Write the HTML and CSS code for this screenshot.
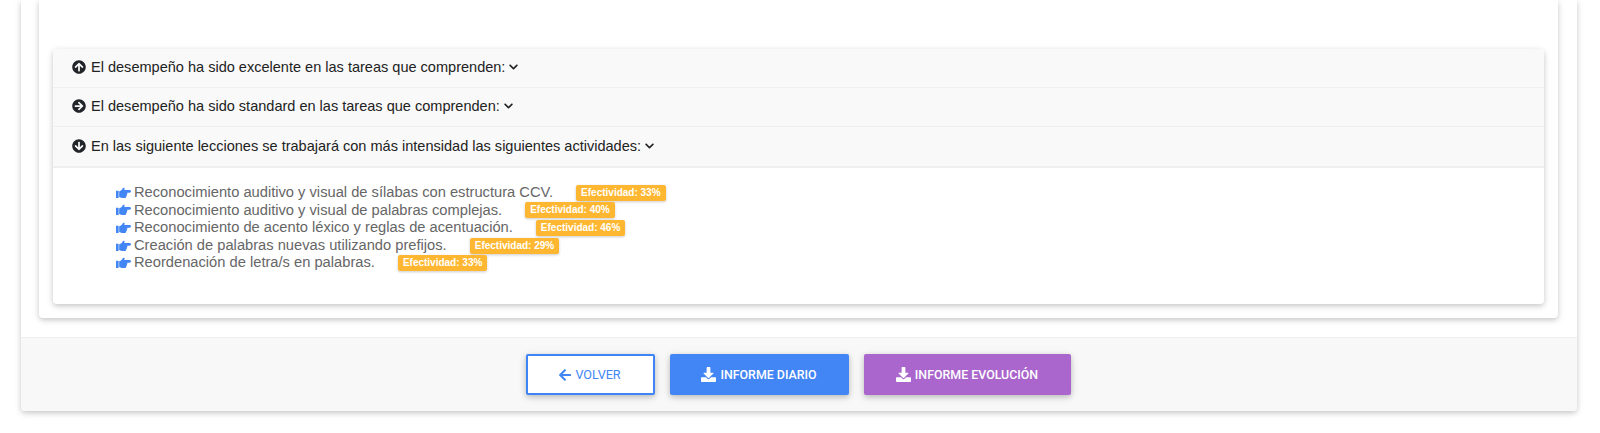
FILE: index.html
```html
<!DOCTYPE html>
<html lang="es">

<head>
    <meta charset="utf-8">
    <title>Informe</title>
    <link rel="stylesheet" href="styles.css">
</head>

<body>
    <svg class="defs" width="0" height="0">
        <symbol id="hand" viewBox="0 0 16 12">
            <path d="M0 3.600h2.800v7.600H0zM3.400 4c1.300-.2 2.400-.9 3.200-2.100C7.200 1 7.900.3 8.600.5c.9.300.7 1.400.2 2.200h5.600c.9 0 1.600.7 1.600 1.500s-.7 1.500-1.600 1.500h-2.500c.4.900.2 1.700-.4 2.100.2.900-.1 1.600-.7 1.900.1.900-.4 1.600-1.400 1.600H6.400c-1.300 0-2.100-.6-3-1V4z"/>
        </symbol>
        <symbol id="abajo" viewBox="0 0 512 512">
            <path d="M216 0h80c13.300 0 24 10.700 24 24v168h87.700c17.800 0 26.700 21.500 14.100 34.100L269.700 378.300c-7.500 7.500-19.800 7.500-27.300 0L90.100 226.100c-12.600-12.600-3.700-34.100 14.100-34.100H192V24c0-13.300 10.700-24 24-24zm296 376v112c0 13.300-10.700 24-24 24H24c-13.300 0-24-10.700-24-24V376c0-13.300 10.700-24 24-24h146.700l49 49c20.100 20.100 52.500 20.100 72.600 0l49-49H488c13.300 0 24 10.700 24 24z"/>
        </symbol>
        <symbol id="chevron" viewBox="0 0 448 512">
            <path d="M207.029 381.476L12.686 187.132c-9.373-9.373-9.373-24.569 0-33.941l22.667-22.667c9.357-9.357 24.522-9.375 33.901-.04L224 284.505l154.745-154.021c9.379-9.335 24.544-9.317 33.901.04l22.667 22.667c9.373 9.373 9.373 24.569 0 33.941L240.971 381.476c-9.373 9.372-24.569 9.372-33.942 0z"/>
        </symbol>
    </svg>

    <main class="tarjeta">
        <div class="tarjeta-cuerpo">
            <section class="resumen">
                <div class="acordeon">

                    <div class="fila">
                        <svg class="ico-fila" viewBox="0 0 512 512"><path d="M8 256C8 119 119 8 256 8s248 111 248 248-111 248-248 248S8 393 8 256zm143.600 28.900l72.400-75.500V392c0 13.300 10.700 24 24 24h16c13.300 0 24-10.700 24-24V209.400l72.400 75.500c9.300 9.700 24.800 9.900 34.300.4l10.900-11c9.400-9.400 9.400-24.600 0-33.900L273 107.700c-9.400-9.400-24.600-9.400-33.900 0L106.300 240.400c-9.400 9.400-9.400 24.600 0 33.900l10.900 11c9.600 9.500 25.100 9.300 34.400-.4z"/></svg>
                        <span>El desempeño ha sido excelente en las tareas que comprenden:</span>
                        <svg class="ico-chevron"><use href="#chevron"/></svg>
                    </div>

                    <div class="fila">
                        <svg class="ico-fila" viewBox="0 0 512 512"><path d="M256 8c137 0 248 111 248 248S393 504 256 504 8 393 8 256 119 8 256 8zm-28.900 143.600l75.500 72.400H120c-13.300 0-24 10.700-24 24v16c0 13.300 10.700 24 24 24h182.600l-75.500 72.400c-9.700 9.300-9.900 24.800-.4 34.300l11 10.900c9.400 9.400 24.600 9.400 33.900 0L404.300 273c9.400-9.400 9.400-24.600 0-33.900L271.600 106.300c-9.400-9.400-24.600-9.400-33.900 0l-11 10.900c-9.500 9.600-9.300 25.100.4 34.400z"/></svg>
                        <span>El desempeño ha sido standard en las tareas que comprenden:</span>
                        <svg class="ico-chevron"><use href="#chevron"/></svg>
                    </div>

                    <div class="fila fila-abierta">
                        <svg class="ico-fila" viewBox="0 0 512 512"><path d="M504 256c0 137-111 248-248 248S8 393 8 256 119 8 256 8s248 111 248 248zm-143.600-28.900L288 302.600V120c0-13.300-10.700-24-24-24h-16c-13.300 0-24 10.700-24 24v182.600l-72.400-75.500c-9.300-9.700-24.800-9.900-34.300-.4l-10.900 11c-9.400 9.400-9.400 24.600 0 33.900L239 404.300c9.400 9.400 24.600 9.400 33.900 0l132.700-132.700c9.400-9.400 9.400-24.600 0-33.900l-10.900-11c-9.600-9.500-25.100-9.300-34.400.4z"/></svg>
                        <span>En las siguiente lecciones se trabajará con más intensidad las siguientes actividades:</span>
                        <svg class="ico-chevron"><use href="#chevron"/></svg>
                    </div>

                    <ul class="lista">
                        <li>
                            <svg class="ico-mano"><use href="#hand"/></svg>
                            <span class="actividad">Reconocimiento auditivo y visual de sílabas con estructura CCV.</span>
                            <span class="efectividad">Efectividad: 33%</span>
                        </li>
                        <li>
                            <svg class="ico-mano"><use href="#hand"/></svg>
                            <span class="actividad">Reconocimiento auditivo y visual de palabras complejas.</span>
                            <span class="efectividad">Efectividad: 40%</span>
                        </li>
                        <li>
                            <svg class="ico-mano"><use href="#hand"/></svg>
                            <span class="actividad">Reconocimiento de acento léxico y reglas de acentuación.</span>
                            <span class="efectividad">Efectividad: 46%</span>
                        </li>
                        <li>
                            <svg class="ico-mano"><use href="#hand"/></svg>
                            <span class="actividad">Creación de palabras nuevas utilizando prefijos.</span>
                            <span class="efectividad">Efectividad: 29%</span>
                        </li>
                        <li>
                            <svg class="ico-mano"><use href="#hand"/></svg>
                            <span class="actividad">Reordenación de letra/s en palabras.</span>
                            <span class="efectividad">Efectividad: 33%</span>
                        </li>
                    </ul>

                </div>
            </section>
        </div>

        <footer class="pie">
            <button class="btn btn-volver">
                <svg class="ico-volver" viewBox="0 0 448 512"><path d="M257.500 445.100l-22.200 22.200c-9.400 9.400-24.600 9.400-33.900 0L7 273c-9.400-9.400-9.400-24.600 0-33.900L201.400 44.700c9.400-9.400 24.600-9.400 33.900 0l22.200 22.200c9.500 9.500 9.300 25-.4 34.300L136.600 216H424c13.300 0 24 10.700 24 24v32c0 13.300-10.700 24-24 24H136.600l120.500 114.800c9.800 9.300 10 24.800.4 34.300z"/></svg>
                Volver
            </button>
            <button class="btn btn-diario">
                <svg class="ico-btn"><use href="#abajo"/></svg>
                Informe diario
            </button>
            <button class="btn btn-evolucion">
                <svg class="ico-btn"><use href="#abajo"/></svg>
                Informe evolución
            </button>
        </footer>
    </main>
</body>

</html>
```
FILE: styles.css
```css
html,
body {
    height: 433px;
    overflow: hidden;
}

body {
    margin: 0;
    background: #fff;
    font-family: "Liberation Sans", Arial, sans-serif;
}

.defs {
    position: absolute;
}

.tarjeta {
    margin: 0 23px 0 21px;
    border-radius: 0 0 4px 4px;
    box-shadow: 0 2px 5px rgba(0, 0, 0, .16), 0 2px 10px rgba(0, 0, 0, .08);
}

.tarjeta-cuerpo {
    padding: 0 19px 19px 18px;
}

.resumen {
    height: 318px;
    box-sizing: border-box;
    padding: 49px 14px 14px 14px;
    border-radius: 0 0 4px 4px;
    box-shadow: 0 2px 5px rgba(0, 0, 0, .16), 0 2px 10px rgba(0, 0, 0, .08);
}

.acordeon {
    height: 255px;
    border-radius: 4px;
    background: #fff;
    box-shadow: 0 2px 5px rgba(0, 0, 0, .16), 0 2px 10px rgba(0, 0, 0, .08);
}

.fila {
    display: flex;
    align-items: center;
    height: 39px;
    padding: 0 0 2px 19px;
    background: #f9f9f9;
    border-bottom: 1px solid #efefef;
    box-sizing: border-box;
    color: #222;
    font-size: 14.54px;
}

.fila-abierta {
    height: 41px;
    padding-bottom: 1px;
    border-bottom-width: 2px;
}

.ico-fila {
    width: 14px;
    height: 14px;
    margin-right: 5px;
    fill: #212529;
}

.ico-chevron {
    width: 9px;
    height: 10px;
    margin-left: 4px;
    fill: #222;
}

.lista {
    margin: 0;
    padding: 16px 0 0 63px;
    list-style: none;
    color: #666;
    font-size: 14.7px;
    line-height: 17.6px;
}

.lista li {
    display: flex;
    align-items: center;
    height: 17.6px;
}

.ico-mano {
    width: 15px;
    height: 12px;
    margin-right: 3px;
    fill: #4285f4;
}

.efectividad {
    margin-left: 23px;
    padding: 0 5px;
    height: 16px;
    line-height: 16px;
    border-radius: 2px;
    background: #ffb732;
    color: #fff;
    font-size: 10px;
    font-weight: bold;
    box-shadow: 0 1px 3px rgba(0, 0, 0, .2);
}

.pie {
    display: flex;
    justify-content: center;
    gap: 15px;
    height: 74px;
    box-sizing: border-box;
    padding: 16px 2px 0 0;
    background: #f8f8f8;
    border-top: 1px solid #eee;
    border-radius: 0 0 4px 4px;
}

.btn {
    display: flex;
    align-items: center;
    justify-content: center;
    height: 41px;
    box-sizing: border-box;
    border: 0;
    border-radius: 2px;
    color: #fff;
    font-family: Roboto, "Liberation Sans", sans-serif;
    font-size: 12.4px;
    font-weight: 500;
    text-transform: uppercase;
    box-shadow: 0 2px 5px rgba(0, 0, 0, .16), 0 2px 10px rgba(0, 0, 0, .12);
}

.btn-volver {
    width: 129px;
    background: #fff;
    border: 2px solid #3f84f4;
    color: #4285f4;
    font-size: 12.6px;
    font-weight: 400;
}

.btn-diario {
    width: 179px;
    background: #4285f4;
}

.btn-evolucion {
    width: 207px;
    background: #aa66cc;
}

.ico-volver {
    width: 12px;
    height: 14px;
    margin-right: 4px;
    fill: #4285f4;
}

.ico-btn {
    width: 15px;
    height: 15px;
    margin-right: 4px;
    fill: #fff;
}
```
